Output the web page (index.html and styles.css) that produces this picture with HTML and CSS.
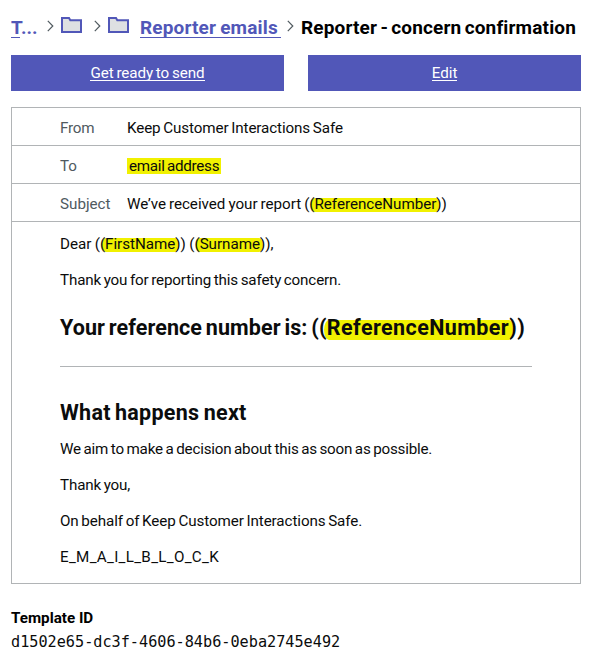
FILE: index.html
```html
<!DOCTYPE html>
<html lang="en">
<head>
<meta charset="utf-8">
<title>Reporter - concern confirmation</title>
<link rel="stylesheet" href="styles.css">
</head>
<body>
<nav class="breadcrumb">
  <a class="crumb-root" href="#"><span class="initial">T</span>...</a>
  <svg class="chevron" viewBox="0 0 7 12"><path d="M.8.8 5.8 6 .8 11.2"/></svg>
  <svg class="folder folder-first" viewBox="0 0 21 16"><path d="M1 1H8L9.3 3.3H20V15H1Z"/></svg>
  <svg class="chevron chevron-second" viewBox="0 0 7 12"><path d="M.8.8 5.8 6 .8 11.2"/></svg>
  <svg class="folder" viewBox="0 0 21 16"><path d="M1 1H8L9.3 3.3H20V15H1Z"/></svg>
  <a class="crumb-folder" href="#">Reporter emails</a>
  <svg class="chevron chevron-third" viewBox="0 0 7 12"><path d="M.8.8 5.8 6 .8 11.2"/></svg>
  <h1>Reporter - concern confirmation</h1>
</nav>
<div class="actions">
  <a class="send" href="#"><span>Get ready to send</span></a>
  <a class="edit" href="#"><span>Edit</span></a>
</div>
<main class="message">
  <dl>
    <div class="row"><dt class="from">From</dt><dd class="sender">Keep Customer Interactions Safe</dd></div>
    <div class="row"><dt>To</dt><dd><mark class="recipient">email address</mark></dd></div>
    <div class="row"><dt class="subject-label">Subject</dt><dd class="subject">We’ve received your report (<mark class="field">(ReferenceNumber)</mark>)</dd></div>
  </dl>
  <div class="body">
    <p class="dear">Dear (<mark class="field">(FirstName)</mark>) (<mark class="field">(Surname)</mark>),</p>
    <p class="thanks">Thank you for reporting this safety concern.</p>
    <h2 class="reference">Your reference number is: (<mark class="field">(ReferenceNumber)</mark>)</h2>
    <hr>
    <h2 class="next">What happens next</h2>
    <p class="aim">We aim to make a decision about this as soon as possible.</p>
    <p class="thank-you">Thank you,</p>
    <p class="behalf">On behalf of Keep Customer Interactions Safe.</p>
    <p class="block">E_M_A_I_L_B_L_O_C_K</p>
  </div>
</main>
<section class="template">
  <h3>Template ID</h3>
  <code>d1502e65-dc3f-4606-84b6-0eba2745e492</code>
</section>
</body>
</html>
```
FILE: styles.css
```css
* { box-sizing: border-box; margin: 0; padding: 0; }
body {
  width: 602px;
  padding: 17px 21px 0 11px;
  background: #fff;
  color: #0b0c0c;
  font: 15.2px/20px Roboto, "Liberation Sans", sans-serif;
  white-space: nowrap;
}
.breadcrumb { display: flex; height: 21px; font-size: 19px; line-height: 21px; font-weight: 700; color: #5157b8; }
.breadcrumb a { color: #5157b8; text-decoration: none; }
.crumb-root { width: 36px; }
.initial { display: inline-block; width: 9px; height: 21px; margin-right: 1px; letter-spacing: -2px; vertical-align: top; }
.initial, .crumb-folder { border-bottom: 1px solid #5157b8; }
.crumb-folder { width: 141px; height: 21px; margin-left: 11px; letter-spacing: .15px; word-spacing: -.8px; }
.chevron { flex: none; width: 7px; height: 12px; margin-top: 3px; }
.chevron path { fill: none; stroke: #505a5f; stroke-width: 1.2; }
.chevron-second { margin-left: 12px; }
.chevron-third { margin-left: 6px; }
.folder { flex: none; width: 21px; height: 16px; margin-left: 7px; }
.folder path { fill: #dee0e2; stroke: #5157b8; stroke-width: 2; }
.breadcrumb h1 { margin-left: 7px; font-size: 19px; line-height: 21px; color: #000; letter-spacing: .15px; word-spacing: -1.6px; }
.actions { display: grid; grid-template-columns: 273px 273px; gap: 24px; margin-top: 17px; }
.actions a { height: 36px; background: #5157b8; color: #fff; text-align: center; text-decoration: none; padding-top: 8px; }
.actions span { display: inline-block; height: 18px; line-height: 20px; border-bottom: 1px solid #fff; }
.send { letter-spacing: -.08px; word-spacing: -.9px; }
.message { width: 570px; height: 477px; margin-top: 16px; border: 1px solid #b1b4b6; }
.row { display: flex; height: 38px; padding: 10px 0 0 48px; border-bottom: 1px solid #b1b4b6; }
dt { width: 67px; color: #505a5f; }
.from { letter-spacing: -.2px; }
.sender { letter-spacing: -.11px; word-spacing: -.9px; }
.subject { letter-spacing: -.03px; word-spacing: -.7px; }
mark { background: none; color: inherit; }
.field { position: relative; z-index: 0; display: inline-block; height: 14px; line-height: 14px; }
.field::before {
  content: "";
  position: absolute;
  z-index: -1;
  inset: 1px 2px -1px;
  border-radius: 4px / 7px;
  background: #f1f100;
}
.recipient { display: inline-block; height: 16px; line-height: 16px; padding: 0 2px; background: #f1f100; letter-spacing: -.27px; word-spacing: -1.2px; }
.body { padding: 12px 48px 0; }
p { height: 20px; margin-bottom: 16px; }
.dear { letter-spacing: -.03px; word-spacing: -.3px; }
.thanks { letter-spacing: -.15px; word-spacing: -1px; }
.aim { letter-spacing: -.2px; word-spacing: -.95px; }
.thank-you { letter-spacing: -.15px; word-spacing: -1px; }
.behalf { letter-spacing: -.09px; word-spacing: -1px; }
.block { letter-spacing: .3px; }
h2 { height: 28px; font-size: 21.5px; line-height: 28px; }
.reference { margin-top: 24px; letter-spacing: .08px; word-spacing: -1.6px; }
.reference .field { height: 20px; line-height: 20px; letter-spacing: .42px; }
.reference .field::before { inset: 2px 3px -2px 5px; border-radius: 5px / 10px; }
hr { height: 1px; border: 0; margin: 24px 0 32px; background: #b1b4b6; }
.next { margin-bottom: 12px; letter-spacing: .27px; word-spacing: -1.3px; }
.template { margin-top: 24px; }
h3 { font-size: 15.2px; line-height: 20px; color: #000; }
code { display: block; margin-top: 4px; font: 15.2px/20px "DejaVu Sans Mono", monospace; }
```
